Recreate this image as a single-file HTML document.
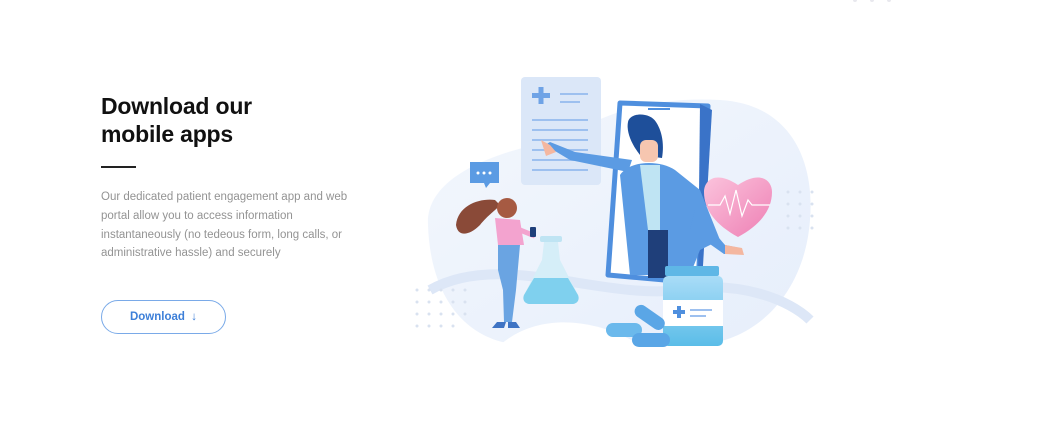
<!DOCTYPE html>
<html><head><meta charset="utf-8"><style>
html,body{margin:0;padding:0;background:#fff;width:1051px;height:422px;overflow:hidden;font-family:"Liberation Sans",sans-serif}
h1{position:absolute;left:101px;top:92px;margin:0;font-size:23px;line-height:28px;font-weight:bold;color:#111;letter-spacing:-0.2px}
.rule{position:absolute;left:101px;top:166px;width:35px;height:2px;background:#222}
p{position:absolute;left:101px;top:188px;margin:0;width:260px;font-size:11.5px;line-height:18.8px;color:#939393}
.btn{position:absolute;left:101px;top:300px;width:125px;height:34px;border:1px solid #7aaae8;border-radius:18px;box-sizing:border-box;color:#3d7fd8;font-weight:bold;font-size:11.5px;line-height:32px;text-align:center}
svg{position:absolute;left:0;top:0}
</style></head><body>
<h1>Download our<br>mobile apps</h1>
<div class="rule"></div>
<p>Our dedicated patient engagement app and web portal allow you to access information instantaneously (no tedeous form, long calls, or administrative hassle) and securely</p>
<div class="btn">Download &nbsp;&darr;</div>
<svg width="1051" height="422" viewBox="0 0 1051 422">
<defs>
<linearGradient id="bl" x1="0" y1="0" x2="1" y2="1"><stop offset="0" stop-color="#f3f7fd"/><stop offset="1" stop-color="#e6eefb"/></linearGradient>
<linearGradient id="hr" x1="0" y1="0" x2="1" y2="1"><stop offset="0" stop-color="#fbc3dc"/><stop offset="1" stop-color="#ee7fb4"/></linearGradient>
<linearGradient id="bt" x1="0" y1="0" x2="0" y2="1"><stop offset="0" stop-color="#a9dcf7"/><stop offset="1" stop-color="#5bbde8"/></linearGradient>
</defs>
<g fill="#e8e8ee"><circle cx="855" cy="0" r="2"/><circle cx="872" cy="0" r="2"/><circle cx="889" cy="0" r="2"/></g>
<path d="M428 225 C425 175 500 150 560 140 C600 115 650 96 720 100 C790 104 815 160 810 220 C805 290 760 340 700 345 L520 345 C460 340 430 290 428 225Z" fill="url(#bl)"/>
<path d="M430 290 C500 250 600 300 680 290 C740 280 790 300 810 320" stroke="#dde7f7" stroke-width="10" fill="none"/>
<path d="M500 345 C540 310 600 320 640 345Z" fill="#fff"/>
<g fill="#d9e2f0">
<circle cx="417" cy="290" r="1.5"/><circle cx="429" cy="290" r="1.5"/><circle cx="441" cy="290" r="1.5"/><circle cx="453" cy="290" r="1.5"/><circle cx="465" cy="290" r="1.5"/>
<circle cx="417" cy="302" r="1.5"/><circle cx="429" cy="302" r="1.5"/><circle cx="441" cy="302" r="1.5"/><circle cx="453" cy="302" r="1.5"/><circle cx="465" cy="302" r="1.5"/>
<circle cx="417" cy="314" r="1.5"/><circle cx="429" cy="314" r="1.5"/><circle cx="441" cy="314" r="1.5"/><circle cx="453" cy="314" r="1.5"/><circle cx="465" cy="314" r="1.5"/>
<circle cx="417" cy="326" r="1.5"/><circle cx="429" cy="326" r="1.5"/><circle cx="441" cy="326" r="1.5"/><circle cx="453" cy="326" r="1.5"/>
<circle cx="788" cy="192" r="1.5"/><circle cx="800" cy="192" r="1.5"/><circle cx="812" cy="192" r="1.5"/>
<circle cx="788" cy="204" r="1.5"/><circle cx="800" cy="204" r="1.5"/><circle cx="812" cy="204" r="1.5"/>
<circle cx="788" cy="216" r="1.5"/><circle cx="800" cy="216" r="1.5"/><circle cx="812" cy="216" r="1.5"/>
<circle cx="788" cy="228" r="1.5"/><circle cx="800" cy="228" r="1.5"/><circle cx="812" cy="228" r="1.5"/>
</g>
<rect x="521" y="77" width="80" height="108" rx="4" fill="#dbe7f8"/>
<g fill="#6fa3e6"><rect x="532" y="93" width="18" height="5"/><rect x="538.5" y="87" width="5" height="17"/></g>
<g stroke="#9dc0ef" stroke-width="2"><line x1="560" y1="94" x2="588" y2="94"/><line x1="560" y1="102" x2="580" y2="102"/>
<line x1="532" y1="120" x2="588" y2="120"/><line x1="532" y1="130" x2="588" y2="130"/><line x1="532" y1="140" x2="588" y2="140"/><line x1="532" y1="150" x2="588" y2="150"/><line x1="532" y1="160" x2="588" y2="160"/><line x1="532" y1="170" x2="588" y2="170"/></g>
<path d="M620 103 L708 106 L698 283 L608 275Z" fill="#fff" stroke="#4f8fde" stroke-width="5" stroke-linejoin="round"/>
<path d="M700 104 L712 110 L702 283 L698 283Z" fill="#3a73c8"/>
<rect x="648" y="108" width="22" height="2" fill="#4f8fde"/>
<path d="M628 122 C630 112 650 112 656 122 C660 128 665 140 662 158 L640 155 C632 145 626 132 628 122Z" fill="#1e4f9a"/>
<rect x="640" y="140" width="18" height="22" rx="6" fill="#f6c6b0"/>
<path d="M620 175 C630 160 660 160 675 170 L700 190 L720 240 L700 250 L690 275 L630 275 Z" fill="#5b9be3"/>
<path d="M640 165 L660 165 L660 230 L648 230Z" fill="#bfe4f3"/>
<path d="M648 230 L668 230 L668 278 L648 278Z" fill="#1f3f7a"/>
<path d="M628 172 L570 160 L545 145 L550 142 L575 152 L632 160Z" fill="#5b9be3"/>
<path d="M541 140 L550 145 L556 152 L546 156 Z" fill="#f4b7a0"/>
<path d="M695 210 L725 245 L740 248 L742 254 L724 254 L690 230Z" fill="#5b9be3"/>
<path d="M725 245 L742 248 L744 255 L725 254Z" fill="#f4b7a0"/>
<path d="M738 237 C760 225 772 210 772 192 C772 180 760 170 738 185 C716 170 704 180 704 192 C704 210 716 225 738 237Z" fill="url(#hr)"/>
<path d="M708 205 L720 205 L725 196 L730 214 L736 190 L742 216 L748 200 L752 205 L770 205" stroke="#fff" stroke-width="1.2" fill="none"/>
<path d="M470 162 H499 V183 H490 L486 188 L484 183 H470Z" fill="#5b9be3"/>
<g fill="#fff"><circle cx="478" cy="173" r="1.5"/><circle cx="484" cy="173" r="1.5"/><circle cx="490" cy="173" r="1.5"/></g>
<path d="M495 200 C480 198 458 205 456 225 C458 238 470 235 480 225 C488 215 496 210 500 205Z" fill="#8a4a38"/>
<circle cx="507" cy="208" r="10" fill="#a65a42"/>
<path d="M495 218 L520 220 L524 245 L498 245Z" fill="#f3a3cf"/>
<path d="M520 230 L535 236" stroke="#f3a3cf" stroke-width="5"/>
<rect x="530" y="227" width="6" height="10" rx="1" fill="#1e3f7a"/>
<path d="M498 245 L520 245 L516 290 L512 322 L504 322 L503 290 L498 270Z" fill="#6aa4e2"/>
<path d="M497 322 L506 322 L504 328 L492 328Z M508 322 L516 322 L520 328 L508 328Z" fill="#3f74c4"/>
<rect x="540" y="236" width="22" height="6" rx="2" fill="#bfe4f3"/>
<path d="M544 242 L558 242 L560 260 L578 295 C580 300 577 304 572 304 L530 304 C525 304 522 300 524 295 L542 260Z" fill="#d5eef8"/>
<path d="M534 278 L568 278 L578 295 C580 300 577 304 572 304 L530 304 C525 304 522 300 524 295Z" fill="#7fd0ee"/>
<rect x="665" y="266" width="54" height="10" rx="2" fill="#5fb7e6"/>
<rect x="663" y="276" width="60" height="70" rx="5" fill="url(#bt)"/>
<rect x="663" y="300" width="60" height="26" fill="#fff"/>
<g fill="#4f8fde"><rect x="673" y="310" width="12" height="4"/><rect x="677" y="306" width="4" height="12"/></g>
<g stroke="#9dc0ef" stroke-width="2"><line x1="690" y1="310" x2="712" y2="310"/><line x1="690" y1="316" x2="706" y2="316"/></g>
<rect x="606" y="323" width="36" height="14" rx="7" fill="#6bb9ec"/>
<rect x="633" y="311" width="34" height="13" rx="6.5" transform="rotate(35 650 317)" fill="#5aa6e6"/>
<rect x="632" y="333" width="38" height="14" rx="7" fill="#5aa6e6"/>
</svg>
</body></html>
